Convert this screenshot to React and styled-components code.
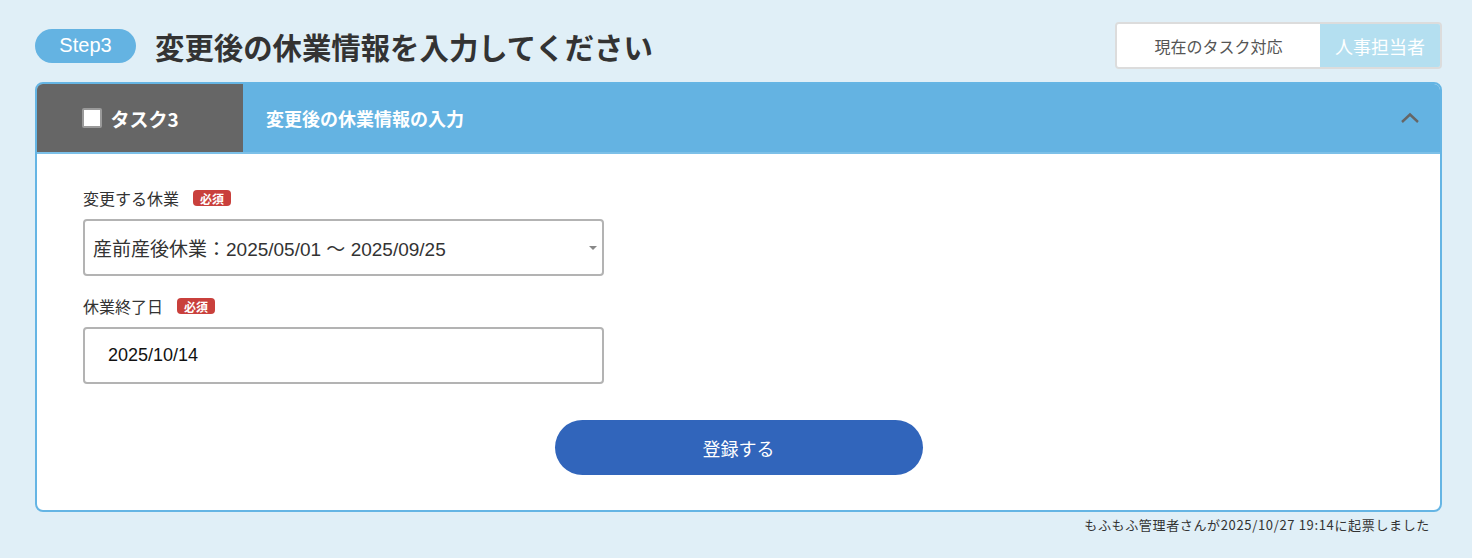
import React from 'react';
import styled, { createGlobalStyle } from 'styled-components';

const GlobalStyle = createGlobalStyle`
  body {
    margin: 0;
    background: #e0eff7;
    font-family: "Liberation Sans", "Noto Sans CJK JP", sans-serif;
    color: #333;
  }
`;

const Page = styled.div`
  padding: 22px 30px 0 35px;
  height: 558px;
  box-sizing: border-box;
`;

const TopBar = styled.div`
  display: flex;
  align-items: center;
  justify-content: space-between;
  height: 47px;
  margin-bottom: 13px;
`;

const TitleGroup = styled.div`
  display: flex;
  align-items: center;
  gap: 19px;
`;

const StepPill = styled.span`
  display: inline-flex;
  align-items: center;
  justify-content: center;
  width: 101px;
  height: 34px;
  border-radius: 17px;
  background: #64b3e2;
  color: #fff;
  font-size: 20px;
`;

const Title = styled.h1`
  margin: 0;
  font-family: "Noto Sans CJK JP", sans-serif;
  font-size: 29.4px;
  font-weight: 700;
  color: #333;
`;

const RoleBox = styled.div`
  display: flex;
  height: 47px;
  border: 2px solid #dcdcdc;
  border-radius: 4px;
  box-sizing: border-box;
  overflow: hidden;
`;

const RoleLabel = styled.div`
  width: 203px;
  display: flex;
  align-items: center;
  justify-content: center;
  background: #fff;
  color: #555;
  font-size: 16px;
`;

const RoleValue = styled.div`
  width: 120px;
  display: flex;
  align-items: center;
  justify-content: center;
  background: #b4dff0;
  color: #fff;
  font-size: 18px;
`;

const Card = styled.div`
  border: 2px solid #65b5e4;
  border-radius: 8px;
  background: #fff;
  overflow: hidden;
`;

const CardHeader = styled.div`
  display: flex;
  height: 68px;
  background: #64b3e2;
  border-bottom: 2px solid #7cc0e8;
`;

const TaskCell = styled.div`
  width: 206px;
  display: flex;
  align-items: center;
  justify-content: center;
  gap: 8px;
  background: #666;
  color: #fff;
  font-family: "Noto Sans CJK JP", sans-serif;
  font-weight: 700;
  font-size: 19px;
  padding-right: 19px;
  box-sizing: border-box;
`;

const Check = styled.span`
  width: 16px;
  height: 16px;
  background: #fff;
  border: 2px solid #9a9a9a;
  border-radius: 2px;
`;

const HeaderTitle = styled.div`
  flex: 1;
  display: flex;
  align-items: center;
  padding-left: 23px;
  color: #fff;
  font-weight: 700;
  font-size: 18px;
`;

const Toggle = styled.div`
  width: 60px;
  display: flex;
  align-items: center;
  justify-content: center;
`;

const Body = styled.div`
  padding: 34px 46px 35px 46px;
`;

const Field = styled.div`
  display: flex;
  flex-direction: column;
  gap: 11px;
  margin-bottom: 20px;
`;

const Label = styled.div`
  display: flex;
  align-items: center;
  gap: 14px;
  font-size: 16px;
  color: #333;
  height: 20px;
`;

const Required = styled.span`
  display: inline-flex;
  align-items: center;
  justify-content: center;
  width: 38px;
  height: 16px;
  border-radius: 4px;
  background: #c9403c;
  color: #fff;
  font-size: 12px;
  font-weight: 700;
`;

const Box = styled.div`
  position: relative;
  width: 521px;
  height: 57px;
  border: 2px solid #b3b3b3;
  border-radius: 4px;
  box-sizing: border-box;
  display: flex;
  align-items: center;
  padding-left: ${p => p.$indent}px;
  font-size: ${p => p.$size}px;
  color: ${p => p.$ink};
`;

const Caret = styled.span`
  position: absolute;
  right: 5px;
  top: 25px;
  width: 0;
  height: 0;
  border-left: 4px solid transparent;
  border-right: 4px solid transparent;
  border-top: 4px solid #888;
`;

const Actions = styled.div`
  display: flex;
  justify-content: center;
  padding-top: 16px;
`;

const Submit = styled.button`
  width: 368px;
  height: 55px;
  border: none;
  border-radius: 28px;
  background: #3165bb;
  color: #fff;
  font-family: "Noto Sans CJK JP", sans-serif;
  font-size: 18px;
`;

const Footnote = styled.div`
  text-align: right;
  padding: 3px 12px 0 0;
  font-family: "Noto Sans CJK JP", sans-serif;
  font-size: 13px;
  letter-spacing: 0.65px;
  color: #333;
`;

export default function App() {
  return (
    <>
      <GlobalStyle />
      <Page>
        <TopBar>
          <TitleGroup>
            <StepPill>Step3</StepPill>
            <Title>変更後の休業情報を入力してください</Title>
          </TitleGroup>
          <RoleBox>
            <RoleLabel>現在のタスク対応</RoleLabel>
            <RoleValue>人事担当者</RoleValue>
          </RoleBox>
        </TopBar>
        <Card>
          <CardHeader>
            <TaskCell>
              <Check />
              タスク3
            </TaskCell>
            <HeaderTitle>変更後の休業情報の入力</HeaderTitle>
            <Toggle>
              <svg width="20" height="12" viewBox="0 0 20 12">
                <path d="M2 10 L10 2.5 L18 10" fill="none" stroke="#666" strokeWidth="2.4" />
              </svg>
            </Toggle>
          </CardHeader>
          <Body>
            <Field>
              <Label>
                変更する休業
                <Required>必須</Required>
              </Label>
              <Box $indent={8} $size={19} $ink="#333">
                産前産後休業：2025/05/01 〜 2025/09/25
                <Caret />
              </Box>
            </Field>
            <Field>
              <Label>
                休業終了日
                <Required>必須</Required>
              </Label>
              <Box $indent={23} $size={18} $ink="#111">
                2025/10/14
              </Box>
            </Field>
            <Actions>
              <Submit>登録する</Submit>
            </Actions>
          </Body>
        </Card>
        <Footnote>もふもふ管理者さんが2025/10/27 19:14に起票しました</Footnote>
      </Page>
    </>
  );
}
